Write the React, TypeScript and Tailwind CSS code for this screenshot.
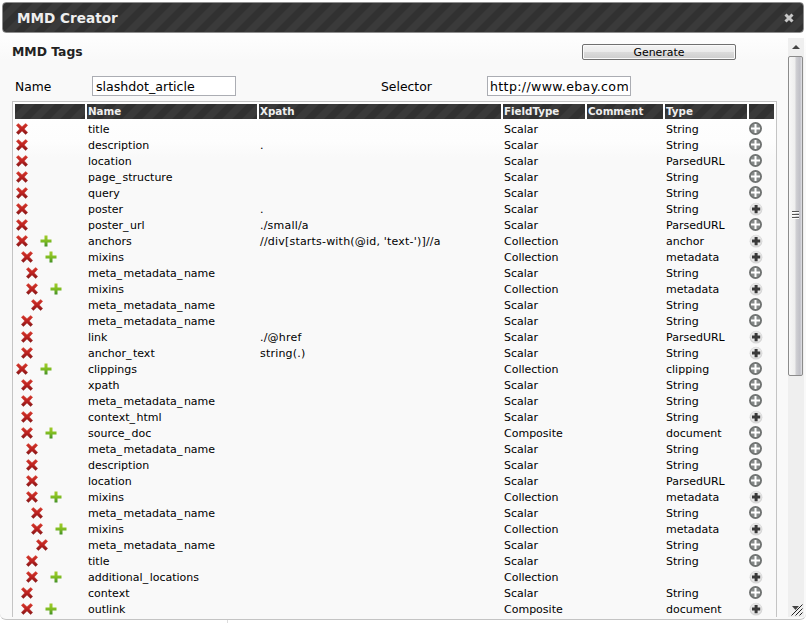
import React from "react";

type Row = {
  name: string;
  indent: number;
  xpath?: string;
  field: string;
  type?: string;
  add?: boolean;
  dark?: boolean;
};

const S = "Scalar";
const C = "Collection";
const rows: Row[] = [
  { name: "title", indent: 0, field: S, type: "String" },
  { name: "description", indent: 0, xpath: ".", field: S, type: "String" },
  { name: "location", indent: 0, field: S, type: "ParsedURL" },
  { name: "page_structure", indent: 0, field: S, type: "String" },
  { name: "query", indent: 0, field: S, type: "String" },
  { name: "poster", indent: 0, xpath: ".", field: S, type: "String", dark: true },
  { name: "poster_url", indent: 0, xpath: "./small/a", field: S, type: "ParsedURL" },
  { name: "anchors", indent: 0, xpath: "//div[starts-with(@id, 'text-')]//a", field: C, type: "anchor", add: true, dark: true },
  { name: "mixins", indent: 1, field: C, type: "metadata", add: true, dark: true },
  { name: "meta_metadata_name", indent: 2, field: S, type: "String" },
  { name: "mixins", indent: 2, field: C, type: "metadata", add: true, dark: true },
  { name: "meta_metadata_name", indent: 3, field: S, type: "String" },
  { name: "meta_metadata_name", indent: 1, field: S, type: "String" },
  { name: "link", indent: 1, xpath: "./@href", field: S, type: "ParsedURL", dark: true },
  { name: "anchor_text", indent: 1, xpath: "string(.)", field: S, type: "String", dark: true },
  { name: "clippings", indent: 0, field: C, type: "clipping", add: true },
  { name: "xpath", indent: 1, field: S, type: "String" },
  { name: "meta_metadata_name", indent: 1, field: S, type: "String" },
  { name: "context_html", indent: 1, field: S, type: "String", dark: true },
  { name: "source_doc", indent: 1, field: "Composite", type: "document", add: true },
  { name: "meta_metadata_name", indent: 2, field: S, type: "String" },
  { name: "description", indent: 2, field: S, type: "String" },
  { name: "location", indent: 2, field: S, type: "ParsedURL" },
  { name: "mixins", indent: 2, field: C, type: "metadata", add: true, dark: true },
  { name: "meta_metadata_name", indent: 3, field: S, type: "String" },
  { name: "mixins", indent: 3, field: C, type: "metadata", add: true, dark: true },
  { name: "meta_metadata_name", indent: 4, field: S, type: "String" },
  { name: "title", indent: 2, field: S, type: "String" },
  { name: "additional_locations", indent: 2, field: C, add: true, dark: true },
  { name: "context", indent: 1, field: S, type: "String" },
  { name: "outlink", indent: 1, field: "Composite", type: "document", add: true, dark: true },
];

const stripes =
  "bg-[linear-gradient(135deg,#313131_24%,#3a3a3a_26%,#3a3a3a_49%,#313131_51%,#313131_74%,#3a3a3a_76%)] bg-[length:20px_20px]";
const grid = "grid grid-cols-[70px_170px_242px_82px_76px_82px_25px] gap-x-[2px]";

function Ident({ text }: { text: string }) {
  return (
    <>
      {text.split("_").map((part, i) => (
        <React.Fragment key={i}>
          {i > 0 && <span className="tracking-[1.5px]">_</span>}
          {part}
        </React.Fragment>
      ))}
    </>
  );
}

function DeleteIcon() {
  return (
    <svg width="12" height="12" viewBox="0 0 12 12" className="block shrink-0">
      <defs>
        <linearGradient id="red" x1="0" y1="0" x2="0" y2="12" gradientUnits="userSpaceOnUse">
          <stop offset="0" stopColor="#d63a2c" />
          <stop offset="0.5" stopColor="#bd2220" />
          <stop offset="1" stopColor="#7e1616" />
        </linearGradient>
      </defs>
      <path d="M0.3 2.3 2.4 0.4 6 3.7 9.6 0.4 11.7 2.3 8.3 5.9 11.7 9.5 9.6 11.5 6 8.1 2.4 11.5 0.3 9.5 3.7 5.9Z" fill="url(#red)" stroke="url(#red)" strokeWidth="0.4" strokeLinejoin="round" />
    </svg>
  );
}

function PlusIcon() {
  return (
    <svg width="12" height="12" viewBox="0 0 12 12" className="block shrink-0">
      <defs>
        <linearGradient id="green" x1="0" y1="0" x2="0" y2="12" gradientUnits="userSpaceOnUse">
          <stop offset="0" stopColor="#a4cc2a" />
          <stop offset="0.5" stopColor="#80bd22" />
          <stop offset="1" stopColor="#3c8b27" />
        </linearGradient>
      </defs>
      <path d="M4.5 0.5h3v4h4v3h-4v4h-3v-4h-4v-3h4Z" fill="url(#green)" />
    </svg>
  );
}

function RoundPlus({ dark }: { dark?: boolean }) {
  return dark ? (
    <svg width="14" height="14" viewBox="0 0 14 14" className="block">
      <circle cx="7" cy="7.2" r="6.4" fill="#d6d6d6" />
      <circle cx="7" cy="6.6" r="5.6" fill="#e6e6e6" />
      <path d="M5.6 3h3v2.6h2.6v3H8.6v2.6h-3V8.6H3v-3h2.6Z" fill="#3a3a3a" />
    </svg>
  ) : (
    <svg width="14" height="14" viewBox="0 0 14 14" className="block">
      <circle cx="6.5" cy="6.5" r="6.5" fill="#6d706f" />
      <circle cx="6.5" cy="6.5" r="4.9" fill="#858988" />
      <path d="M5.5 2h2v3.5H11v2H7.5V11h-2V7.5H2v-2h3.5Z" fill="#fff" />
    </svg>
  );
}

function Scrollbar() {
  return (
    <div className="ml-[11px] flex w-[16px] flex-col bg-[#efefef]">
      <div className="flex h-[18px] items-center justify-center">
        <svg width="8" height="6" viewBox="0 0 8 6"><path d="M4 1 8 5H0Z" fill="#444" /></svg>
      </div>
      <div className="flex h-[320px] w-[15px] items-center justify-center rounded-[2px] border border-[#8b8b8b] bg-[linear-gradient(90deg,#f7f7f7,#eeeeee_45%,#cfcfd3_55%,#bfbfc6_85%,#e3e3e7)] pb-[3px]">
        <svg width="7" height="9" viewBox="0 0 7 9">
          <path d="M0 1.5h7M0 4.5h7M0 7.5h7" stroke="#555" />
          <path d="M0 2.5h7M0 5.5h7M0 8.5h7" stroke="#fff" />
        </svg>
      </div>
      <div className="flex flex-1 items-end pb-px pl-[3px]">
        <svg width="13" height="12" viewBox="0 0 13 12">
          <path d="M1 2H8L4.5 6Z" fill="#444" />
          <path d="M0.5 11.5 11.5 0.5M4.5 11.5 11.5 4.5M8.5 11.5 11.5 8.5" stroke="#222" fill="none" />
        </svg>
      </div>
    </div>
  );
}

export default function App() {
  return (
    <div className="h-[623px] w-[806px] overflow-hidden bg-white font-['DejaVu_Sans',Verdana,sans-serif] text-black">
      <div className="flex h-[620px] flex-col rounded-[6px] border-b border-[#c4c4c4] bg-[#f9f9f9] bg-[linear-gradient(#ffffff_30px,#f9f9f9_60px)] px-[2px] pt-[2px]">
        <header className={`flex h-[31px] shrink-0 items-center justify-between rounded-[4px] border border-[#8f8f8f] pl-[14px] pr-[9px] ${stripes}`}>
          <h1 className="pt-[2px] text-[13.6px] font-bold leading-none text-[#eeeeee]">MMD Creator</h1>
          <svg width="10" height="10" viewBox="0 0 10 10">
            <path d="M1.5 1.5 8.5 8.5M8.5 1.5 1.5 8.5" stroke="#c8c8c8" strokeWidth="3" />
          </svg>
        </header>
        <div className="mt-[5px] flex h-[579px] pl-[10px]">
          <main className="flex h-[579px] w-[765px] flex-col overflow-hidden">
            <div className="flex h-[28px] shrink-0 items-start justify-between pr-[41px] pt-[6px]">
              <h2 className="pt-[1px] text-[12.4px] font-bold leading-[14px] text-[#222]">MMD Tags</h2>
              <button className="h-[16px] w-[154px] rounded-[2px] border border-[#707070] bg-[linear-gradient(#f3f3f3,#ebebeb_48%,#dcdcdc_50%,#cdcdcd)] text-[10.9px] leading-[15px] shadow-[inset_0_0_0_1px_#fafafa]">
                Generate
              </button>
            </div>
            <div className="flex h-[35px] shrink-0 items-start pl-[3px] pt-[10px]">
              <label className="w-[77px] pt-[1px] text-[12.3px] leading-[20px]">Name</label>
              <div className="flex h-[20px] w-[144px] items-center border border-[#abadb3] bg-white pl-[3px] pt-[2px] text-[12.6px] leading-none">
                slashdot_article
              </div>
              <label className="ml-[145px] w-[106px] pt-[1px] text-[12.4px] leading-[20px]">Selector</label>
              <div className="flex h-[20px] w-[144px] items-center overflow-hidden border border-[#abadb3] bg-white px-[2px] pt-[2px] text-[12.6px] leading-none">
                <span className="w-full overflow-hidden whitespace-nowrap py-1 tracking-[0.35px]">http://www.ebay.com/</span>
              </div>
            </div>
            <section className="w-[765px] shrink-0 border border-[#c4c4c4] bg-[linear-gradient(#ffffff_0px,#fdfdfd_40px,#f9f9f9_55px)] pl-[2px] pt-[2px]">
              <div className={`${grid} h-[14px] text-[10.3px] font-bold leading-[15px] text-[#eee]`}>
                {["", "Name", "Xpath", "FieldType", "Comment", "Type", ""].map((h, i) => (
                  <div key={i} className={`pl-px ${stripes}`}>{h}</div>
                ))}
              </div>
              <div className="pt-[3px]">
                {rows.map((r, i) => (
                  <div key={i} className={`${grid} h-[16px] whitespace-nowrap text-[11px] leading-[18px]`}>
                    <div className="flex h-[16px] items-center gap-[12px] pl-px">
                      <div className="-mr-[12px] h-px shrink-0" style={{ width: r.indent * 5 }} />
                      <DeleteIcon />
                      {r.add && <PlusIcon />}
                    </div>
                    <div className="pl-px"><Ident text={r.name} /></div>
                    <div className="pl-px tracking-[0.2px]">{r.xpath}</div>
                    <div className="pl-px">{r.field}</div>
                    <div />
                    <div className="pl-px">{r.type}</div>
                    <div className="pt-px"><RoundPlus dark={r.dark} /></div>
                  </div>
                ))}
              </div>
            </section>
          </main>
          <Scrollbar />
        </div>
      </div>
      <div className="ml-[227px] h-[3px] w-px bg-[#ddd]" />
    </div>
  );
}
